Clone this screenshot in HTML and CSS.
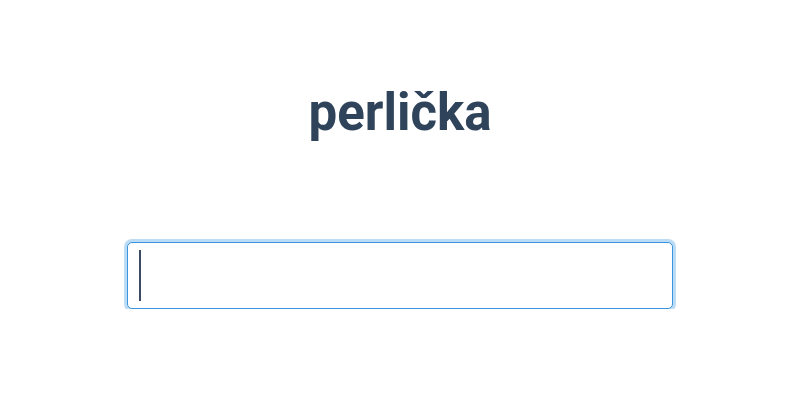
FILE: index.html
```html
<!DOCTYPE html>
<html lang="cs">
<head>
<meta charset="utf-8">
<title>perlička</title>
<link rel="stylesheet" href="styles.css">
</head>
<body>
<main class="page">
  <h1 class="title">perlička</h1>
  <div class="field" role="textbox" aria-label="perlička"><span class="caret"></span></div>
</main>
</body>
</html>
```

FILE: styles.css
```css
html, body {
  margin: 0;
  padding: 0;
  background: #ffffff;
}
.page {
  display: flex;
  flex-direction: column;
  align-items: center;
  padding-top: 80px;
  font-family: Roboto, "Noto Sans", sans-serif;
}
.title {
  margin: 0;
  font-size: 51px;
  font-weight: 700;
  line-height: 66px;
  color: #2f435a;
}
.field {
  box-sizing: border-box;
  margin-top: 96px;
  width: 546px;
  height: 67px;
  border: 1px solid #3b94de;
  border-radius: 5px;
  box-shadow: 0 0 0 3px #bcdcf5;
  background: #fff;
  display: flex;
  align-items: center;
  padding-left: 11px;
}
.caret {
  width: 2px;
  height: 51px;
  background: #3a4a60;
}
```
